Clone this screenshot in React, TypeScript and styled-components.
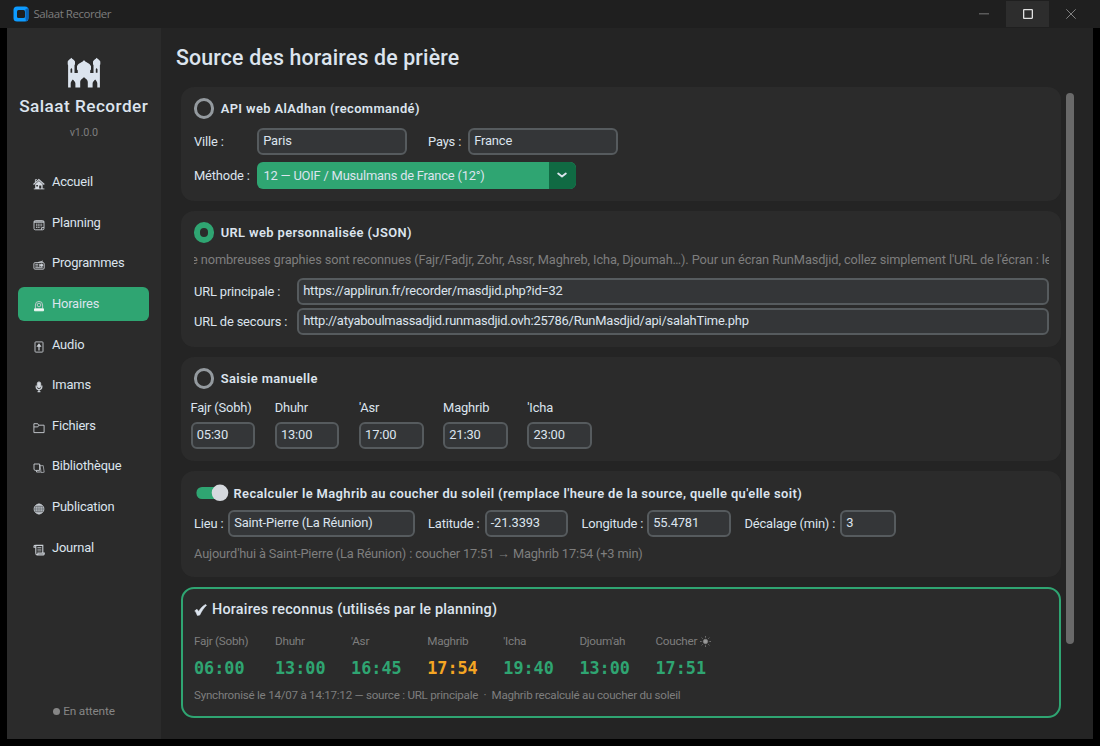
import React from "react";
import styled, { createGlobalStyle } from "styled-components";

const c = {
  green: "#2fa572",
  greenDark: "#106a43",
  text: "#dce4ee",
  muted: "#7e7e7e",
  card: "#2b2b2b",
  bg: "#242424",
};

const Global = createGlobalStyle`
  * { box-sizing: border-box; }
  body { margin: 0; background: #000; overflow: hidden; }
`;

const Window = styled.div`
  width: 1100px;
  height: 746px;
  background: #000;
  display: flex;
  flex-direction: column;
  font-family: Roboto, "Liberation Sans", sans-serif;
  font-size: 12.9px;
  letter-spacing: -0.16px;
  color: ${c.text};
  white-space: nowrap;
`;

const TitleBar = styled.header`
  height: 28px;
  flex: none;
  background: #1f1f1f;
  display: flex;
  align-items: center;
  padding: 0 7px 0 13px;
`;

const AppName = styled.span`
  margin-left: 4.5px;
  flex: 1;
  font: 11.5px/28px "Open Sans", sans-serif;
  letter-spacing: -0.45px;
  color: #7d7d7d;
`;

const WinButton = styled.div<{ $on?: boolean }>`
  width: ${(p) => (p.$on ? 43 : 44)}px;
  height: 26px;
  display: flex;
  align-items: center;
  justify-content: center;
  background: ${(p) => (p.$on ? "#2d2d2d" : "transparent")};
`;

const Body = styled.div`
  flex: none;
  height: 711px;
  margin: 0 7px;
  display: flex;
  background: ${c.bg};
`;

const Sidebar = styled.aside`
  width: 153.5px;
  background: ${c.card};
  display: flex;
  flex-direction: column;
  align-items: center;
  padding-top: 29px;
`;

const Brand = styled.div`
  margin-top: 6px;
  font-size: 17.2px;
  font-weight: 500;
  line-height: 24px;
  letter-spacing: 0.46px;
`;

const Version = styled.div`
  margin-top: 7px;
  font-size: 10.8px;
  line-height: 16px;
  color: ${c.muted};
`;

const Nav = styled.nav`
  margin-top: 24px;
  width: 131px;
  display: flex;
  flex-direction: column;
  gap: 6px;
`;

const NavItem = styled.a<{ $active?: boolean }>`
  height: 34.6px;
  border-radius: 6px;
  padding-left: 15px;
  display: flex;
  align-items: center;
  gap: 6.7px;
  line-height: 20px;
  background: ${(p) => (p.$active ? c.green : "transparent")};
  svg { margin-top: 4px; }
`;

const Status = styled.div`
  margin-top: auto;
  margin-bottom: 20px;
  display: flex;
  align-items: center;
  gap: 3.5px;
  font-size: 11.8px;
  line-height: 16px;
  color: #868686;
`;

const StatusDot = styled.i`
  width: 7px;
  height: 7px;
  margin-top: 1px;
  border-radius: 50%;
  background: #868686;
`;

const Main = styled.main`
  flex: 1;
  padding: 15px 19px 0 15.5px;
`;

const PageTitle = styled.h1`
  margin: 0;
  font-size: 21.3px;
  font-weight: 500;
  line-height: 30px;
  letter-spacing: 0.17px;
`;

const Scroll = styled.div`
  display: flex;
  justify-content: space-between;
  margin-top: 14px;
  padding-left: 5px;
`;

const ScrollThumb = styled.div`
  width: 8px;
  height: 551px;
  margin-top: 6px;
  border-radius: 4px;
  background: #696969;
`;

const Cards = styled.div`
  width: 880px;
  display: flex;
  flex-direction: column;
  gap: 10px;
`;

const Card = styled.section<{ $h: number; $result?: boolean }>`
  height: ${(p) => p.$h}px;
  border-radius: 13px;
  background: ${c.card};
  padding: ${(p) => (p.$result ? "10.5px 11px 0" : "11px 12px 0 13px")};
  border: ${(p) => (p.$result ? `2px solid ${c.green}` : "none")};
`;

const OptionHead = styled.div<{ $gap?: number }>`
  height: 21px;
  display: flex;
  align-items: center;
  gap: ${(p) => p.$gap ?? 6.4}px;
`;

const Radio = styled.i<{ $on?: boolean }>`
  width: 20.6px;
  height: 20.6px;
  margin-left: -0.3px;
  border-radius: 50%;
  border: ${(p) => (p.$on ? `6px solid ${c.green}` : "3px solid #949a9f")};
`;

const Strong = styled.span<{ $drop?: number }>`
  font-size: 12.9px;
  font-weight: 600;
  line-height: 20px;
  letter-spacing: 0.39px;
  padding-top: ${(p) => p.$drop ?? 1}px;
`;

const Row = styled.div<{ $mt: number }>`
  display: flex;
  align-items: center;
  height: 26.6px;
  margin-top: ${(p) => p.$mt}px;
`;

const Label = styled.label<{ $w?: number; $ml?: number }>`
  width: ${(p) => (p.$w ? p.$w + "px" : "auto")};
  flex: none;
  margin-left: ${(p) => p.$ml ?? 0}px;
  padding-top: 1px;
  line-height: 20px;
`;

const Field = styled.div<{ $w: number; $ls?: number }>`
  width: ${(p) => p.$w}px;
  height: 26.6px;
  flex: none;
  border: 2px solid #565b5e;
  border-radius: 6px;
  background: #343638;
  padding-left: 4.2px;
  line-height: 22px;
  letter-spacing: ${(p) => p.$ls ?? -0.15}px;
`;

const Select = styled.div`
  width: 318.6px;
  height: 26.6px;
  border-radius: 6px;
  overflow: hidden;
  display: flex;
  background: ${c.green};
  line-height: 27px;
  padding-left: 6.5px;
  letter-spacing: -0.2px;
  justify-content: space-between;
`;

const SelectArrow = styled.div`
  width: 26.3px;
  background: ${c.greenDark};
  display: flex;
  align-items: center;
  justify-content: center;
`;

const Hint = styled.p<{ $mt: number; $ls: number }>`
  margin: ${(p) => p.$mt}px 0 0;
  font-size: 12.8px;
  line-height: 18px;
  letter-spacing: ${(p) => p.$ls}px;
  color: ${c.muted};
  overflow: hidden;
`;

const Shifted = styled.span`
  margin-left: -3px;
`;

const Times = styled.div`
  display: flex;
  gap: 19.5px;
  margin: 9px 0 0 -3.5px;
`;

const TimeColumn = styled.div`
  width: 64.7px;
`;

const TimeLabel = styled.div`
  line-height: 20px;
  margin-bottom: 4px;
`;

const ResultTitle = styled.h2`
  margin: 0;
  display: flex;
  align-items: center;
  gap: 5px;
  font-size: 14.4px;
  font-weight: 500;
  line-height: 20px;
  letter-spacing: 0.2px;
`;

const Results = styled.div`
  display: grid;
  grid-template-columns: 81px repeat(6, 76.1px);
  margin-top: 12.5px;
`;

const ResultLabel = styled.div`
  font-size: 11.7px;
  letter-spacing: -0.24px;
  line-height: 18px;
  color: ${c.muted};
  display: flex;
  align-items: center;
  gap: 3px;
`;

const ResultTime = styled.div<{ $warn?: boolean }>`
  margin-top: 6px;
  font: bold 16.8px/24px "DejaVu Sans Mono", monospace;
  letter-spacing: 0;
  color: ${(p) => (p.$warn ? "#f5a623" : c.green)};
`;

const Footnote = styled.div`
  margin-top: 5.5px;
  font-size: 11.6px;
  letter-spacing: -0.24px;
  line-height: 18px;
  color: ${c.muted};
  white-space: pre;
`;

const Glyph = ({ children }: { children: React.ReactNode }) => (
  <svg width="12" height="12" viewBox="0 0 12 12" fill="none" stroke="#c9ced4" strokeWidth="0.9">
    {children}
  </svg>
);

const glyphs: Record<string, React.ReactNode> = {
  Accueil: (
    <>
      <path d="M.5 6.400 5.800 1.600l5.500 4.800" strokeWidth="1.300" />
      <path d="M2.400 4V1.600h1.500M.8 10.900h10.600" />
      <path fillRule="evenodd" d="M2.200 6.300 5.900 3l3.700 3.300V11H8.300V7.500H6.200V11h-4zM3.300 7v1.600h1.600V7z" fill="#d5dae0" stroke="none" />
    </>
  ),
  Planning: (
    <>
      <rect x="1" y="1.600" width="10" height="9.200" rx="1.300" />
      <path d="M1 3h10" strokeWidth="1.400" />
      <path d="M3 5.200h6.200M3 6.800h6.200M3 8.400h4.200" strokeDasharray="1.200 .5" />
      <path d="M8.600 10.800V8.600H11" />
    </>
  ),
  Programmes: (
    <>
      <rect x=".9" y="3.600" width="10.300" height="6.600" rx="1.200" />
      <path d="M5 3.500 10 2M2.300 5.300h3M2.300 7h3M2.300 8.700h7.400M6.700 4.800v3" />
      <circle cx="8.600" cy="6.200" r="1.200" fill="#d5dae0" />
    </>
  ),
  Horaires: (
    <>
      <path d="M2.400 8.500V5a3.600 3.600 0 0 1 7.200 0v3.500" />
      <circle cx="6" cy="5" r="1.800" />
      <path d="M1.500 8.800h9v2h-9z" fill="#f2f8f6" stroke="#f2f8f6" />
    </>
  ),
  Audio: (
    <>
      <rect x="2" y=".9" width="8" height="10.200" rx=".8" />
      <path d="M6 9.400V5.200M4.600 5.200 6 3.200l1.400 2z" fill="#d5dae0" strokeWidth="1.200" />
    </>
  ),
  Imams: (
    <>
      <rect x="4.300" y=".9" width="3.400" height="5.800" rx="1.700" fill="#d5dae0" />
      <path d="M3.200 4.500v1.300a2.800 2.800 0 0 0 5.600 0V4.500M6 8.600V11M4.600 10.600h2.800" strokeWidth="1.300" />
    </>
  ),
  Fichiers: <path d="M.9 10.600V1.700h3.800l1 1.500h5.400v7.400zM.9 4.900h3.900l1-1.600" />,
  Bibliothèque: (
    <>
      <path d="M1 2h5.600v6.400H2.200L1 7.600zM6.600 3.400l1-.2M3.500 8.600V10h4.200" />
      <path d="m7 3.800 3.200-.2 1 6.600-3 .4z" opacity=".75" />
    </>
  ),
  Publication: (
    <>
      <circle cx="6" cy="6" r="4.900" fill="#8f959b" />
      <path d="M6 1v10" />
      <ellipse cx="6" cy="6" rx="2.400" ry="4.900" />
      <path d="M1 6h10M1.700 3.700h8.600M1.700 8.300h8.600" stroke="#5a5e62" strokeWidth=".7" />
    </>
  ),
  Journal: (
    <>
      <path d="M2.800 9V2.200C2.800 1.300 1 1 1 2.300v.9h1.800M2.200 1.400h7.600v7.800M4 10.900h6.100c1.300 0 1.200-1.800 1.200-1.800H4.900s.1 1.800-1 1.800-1.100-1.200-1.100-1.900" strokeWidth="1.100" />
      <path d="M4.400 3.500h4M4.400 5.200h4M4.400 6.900h4" opacity=".8" />
    </>
  ),
};

const Mosque = () => (
  <svg width="34" height="31" viewBox="0 0 34 31" fill={c.text}>
    <path
      fillRule="evenodd"
      d="M1.100 30.500V8.300L.7 7.200V4.600C1.200 2.800 3.400 2.200 4.300.7c.9 1.500 3.100 2.100 3.700 3.900v2.600l-.5 1.100V16h3.300v-2.600l-.8-1V9.300c1-3.200 5.300-3.700 7-6.300 1.700 2.600 6 3.100 7 6.300v3.100l-.8 1V16h3.300V8.300L26 7.200V4.600c.6-1.800 2.800-2.400 3.700-3.900.9 1.500 3.100 2.100 3.600 3.900v2.600l-.4 1.100v22.200h-2.600v-4c0-2.200-1.300-2.700-2.100-4-.9 1.300-2.600 1.800-2.600 4v4h-4.800v-5.300c0-2.800-2.400-3.300-3.800-5.200-1.400 1.900-3.800 2.400-3.800 5.200v5.300H8.400v-4c0-2.200-1.700-2.700-2.600-4-.8 1.300-2.100 1.800-2.100 4v4zM3.500 12.300v3.500h1.700v-3.500l-.8-1.200zM28.800 12.300v3.500h1.700v-3.500l-.9-1.200z"
    />
  </svg>
);

const Option = ({ on, children }: { on?: boolean; children: React.ReactNode }) => (
  <OptionHead>
    <Radio $on={on} />
    <Strong>{children}</Strong>
  </OptionHead>
);

const Switch = () => (
  <svg width="35" height="20" viewBox="0 0 35 20">
    <rect x="2.500" y="4" width="28" height="12" rx="5.500" fill={c.green} />
    <circle cx="26" cy="9.800" r="8.300" fill="#d5d9de" />
  </svg>
);

const manual = [
  ["Fajr (Sobh)", "05:30"],
  ["Dhuhr", "13:00"],
  ["'Asr", "17:00"],
  ["Maghrib", "21:30"],
  ["'Icha", "23:00"],
];

const recognised = [
  ["Fajr (Sobh)", "06:00"],
  ["Dhuhr", "13:00"],
  ["'Asr", "16:45"],
  ["Maghrib", "17:54"],
  ["'Icha", "19:40"],
  ["Djoum'ah", "13:00"],
  ["Coucher", "17:51"],
];

const Sun = () => (
  <svg width="11" height="11" viewBox="0 0 11 11" stroke={c.muted} strokeWidth="0.8">
    <circle cx="5.500" cy="5.500" r="2.200" fill="#999" />
    <path d="M5.500 0v1.700M5.500 9.300V11M0 5.500h1.700M9.300 5.500H11M1.600 1.600l1.100 1.100M8.300 8.300l1.100 1.100M1.600 9.400l1.100-1.100M8.300 2.700l1.100-1.100" />
  </svg>
);

export default function App() {
  return (
    <Window>
      <Global />
      <TitleBar>
        <svg width="16" height="16" viewBox="0 0 16 16">
          <rect x=".5" y=".5" width="15" height="15" rx="3.500" fill="#0d9bff" />
          <path d="M12.500 3 15.300 2.200c.2.500.2 1 .2 1.800v8a3.500 3.500 0 0 1-2.500 3.300L12.500 13z" fill="#0b63b5" />
          <rect x="4" y="4" width="8" height="8" rx="1.500" fill="#1f1f1f" />
        </svg>
        <AppName>Salaat Recorder</AppName>
        <WinButton>
          <svg width="10" height="2"><rect width="10" height="1.500" fill="#5a5a5a" /></svg>
        </WinButton>
        <WinButton $on>
          <svg width="10" height="10" fill="none" stroke="#e0e0e0" strokeWidth="1.300">
            <rect x=".65" y=".65" width="8.700" height="8.700" rx=".5" />
          </svg>
        </WinButton>
        <WinButton>
          <svg width="10" height="10" stroke="#828282"><path d="m.3.300 9.400 9.400M9.700.300.300 9.700" /></svg>
        </WinButton>
      </TitleBar>
      <Body>
        <Sidebar>
          <Mosque />
          <Brand>Salaat Recorder</Brand>
          <Version>v1.0.0</Version>
          <Nav>
            {Object.keys(glyphs).map((name) => (
              <NavItem key={name} $active={name === "Horaires"}>
                <Glyph>{glyphs[name]}</Glyph>
                {name}
              </NavItem>
            ))}
          </Nav>
          <Status>
            <StatusDot />
            En attente
          </Status>
        </Sidebar>
        <Main>
          <PageTitle>Source des horaires de prière</PageTitle>
          <Scroll>
            <Cards>
              <Card $h={114}>
                <Option>API web AlAdhan (recommandé)</Option>
                <Row $mt={9.3}>
                  <Label $w={63}>Ville :</Label>
                  <Field $w={150}>Paris</Field>
                  <Label $w={40} $ml={21}>Pays :</Label>
                  <Field $w={150}>France</Field>
                </Row>
                <Row $mt={7.2}>
                  <Label $w={63}>Méthode :</Label>
                  <Select>
                    12 — UOIF / Musulmans de France (12°)
                    <SelectArrow>
                      <svg width="10" height="6" fill="none" stroke={c.text} strokeWidth="1.900" strokeLinecap="round" strokeLinejoin="round">
                        <path d="M1.200 1.500 5 4.500l3.800-3" />
                      </svg>
                    </SelectArrow>
                  </Select>
                </Row>
              </Card>
              <Card $h={136}>
                <Option on>URL web personnalisée (JSON)</Option>
                <Hint $mt={7.5} $ls={-0.107}>
                  <Shifted>
                    e nombreuses graphies sont reconnues (Fajr/Fadjr, Zohr, Assr, Maghreb, Icha, Djoumah…). Pour un écran RunMasdjid, collez simplement l'URL de l'écran : le
                  </Shifted>
                </Hint>
                <Row $mt={9.5}>
                  <Label $w={103}>URL principale :</Label>
                  <Field $w={752} $ls={-0.18}>https://applirun.fr/recorder/masdjid.php?id=32</Field>
                </Row>
                <Row $mt={3.4}>
                  <Label $w={103}>URL de secours :</Label>
                  <Field $w={752} $ls={-0.205}>http://atyaboulmassadjid.runmasdjid.ovh:25786/RunMasdjid/api/salahTime.php</Field>
                </Row>
              </Card>
              <Card $h={104}>
                <Option>Saisie manuelle</Option>
                <Times>
                  {manual.map(([name, value]) => (
                    <TimeColumn key={name}>
                      <TimeLabel>{name}</TimeLabel>
                      <Field $w={64.7}>{value}</Field>
                    </TimeColumn>
                  ))}
                </Times>
              </Card>
              <Card $h={106}>
                <OptionHead $gap={4.5}>
                  <Switch />
                  <Strong $drop={2}>Recalculer le Maghrib au coucher du soleil (remplace l'heure de la source, quelle qu'elle soit)</Strong>
                </OptionHead>
                <Row $mt={7}>
                  <Label $w={34}>Lieu :</Label>
                  <Field $w={187}>Saint-Pierre (La Réunion)</Field>
                  <Label $w={56.5} $ml={13}>Latitude :</Label>
                  <Field $w={83.5}>-21.3393</Field>
                  <Label $w={65.5} $ml={13.5}>Longitude :</Label>
                  <Field $w={84}>55.4781</Field>
                  <Label $w={95.5} $ml={13.5}>Décalage (min) :</Label>
                  <Field $w={56}>3</Field>
                </Row>
                <Hint $mt={8} $ls={-0.15}>Aujourd'hui à Saint-Pierre (La Réunion) : coucher 17:51 → Maghrib 17:54 (+3 min)</Hint>
              </Card>
              <Card $h={131} $result>
                <ResultTitle>
                  <svg width="13" height="12" viewBox="0 0 13 12" fill={c.text} stroke={c.text} strokeWidth="0.6" strokeLinejoin="round">
                    <path d="M.8 6.800 3 5.300c.9.900 1.200 1.700 1.600 2.300C6.500 4.500 8.800 1.800 11.500.500l1 .7C9.700 4 7.500 7.300 5.700 11.100l-2.400.3C2.800 9.700 2.100 8.200.8 6.800z" />
                  </svg>
                  Horaires reconnus (utilisés par le planning)
                </ResultTitle>
                <Results>
                  {recognised.map(([name, value]) => (
                    <div key={name}>
                      <ResultLabel>
                        {name}
                        {name === "Coucher" && <Sun />}
                      </ResultLabel>
                      <ResultTime $warn={name === "Maghrib"}>{value}</ResultTime>
                    </div>
                  ))}
                </Results>
                <Footnote>{"Synchronisé le 14/07 à 14:17:12 — source : URL principale  ·  Maghrib recalculé au coucher du soleil"}</Footnote>
              </Card>
            </Cards>
            <ScrollThumb />
          </Scroll>
        </Main>
      </Body>
    </Window>
  );
}
